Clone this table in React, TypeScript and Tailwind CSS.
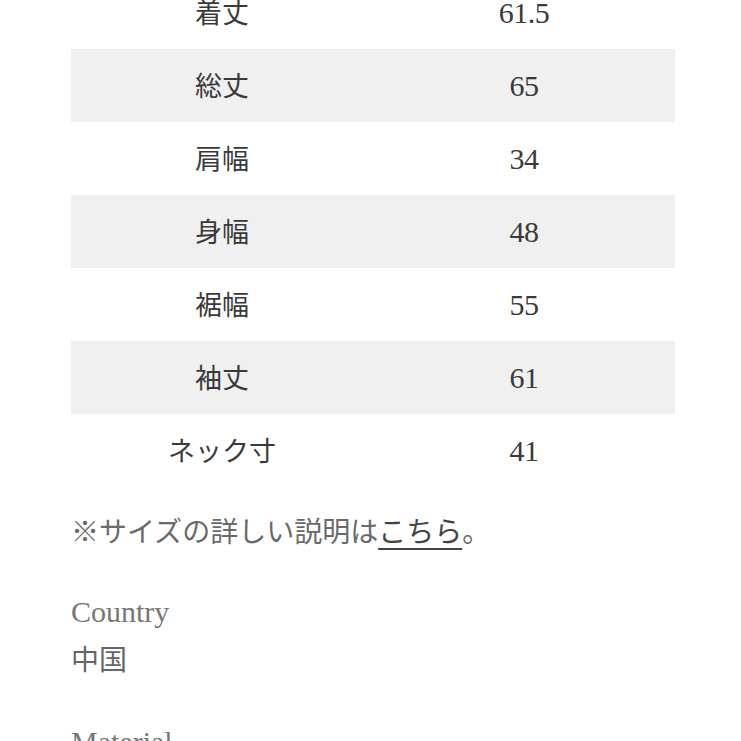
import React from "react";

const rows: [string, string][] = [
  ["着丈", "61.5"],
  ["総丈", "65"],
  ["肩幅", "34"],
  ["身幅", "48"],
  ["裾幅", "55"],
  ["袖丈", "61"],
  ["ネック寸", "41"],
];

const jp = "font-['Noto_Sans_CJK_JP','Noto_Sans',sans-serif]";
const serif = "font-['Liberation_Serif','Noto_Sans_CJK_JP',serif]";

export default function App() {
  return (
    <div className="w-[741px] h-[741px] overflow-hidden bg-white">
      <div className="ml-[71px] w-[604px] mt-[-24px]">
        {/* Size table */}
        <div className="flex flex-col">
          {rows.map(([label, value], i) => (
            <div
              key={label}
              className={`grid grid-cols-2 h-[73px] items-center ${i % 2 === 1 ? "bg-[#f0f0f0]" : "bg-white"}`}
            >
              <div className={`text-center text-[27px] text-[#3a3a3a] ${jp}`}>{label}</div>
              <div className={`text-center text-[30px] tracking-[-0.5px] text-[#3a3a3a] ${serif}`}>{value}</div>
            </div>
          ))}
        </div>

        {/* Note */}
        <p className={`mt-[23px] text-[28px] leading-[40px] text-[#6a6a6a] ${jp}`}>
          ※サイズの詳しい説明は
          <span className="underline underline-offset-[6px] decoration-[2px] text-[#444]">こちら</span>。
        </p>

        {/* Country */}
        <div className="mt-[42px]">
          <div className={`text-[30px] leading-[40px] text-[#777] ${serif}`}>Country</div>
          <div className={`mt-[6px] text-[28px] leading-[40px] text-[#666] ${jp}`}>中国</div>
        </div>

        {/* Material */}
        <div className="mt-[44px]">
          <div className={`text-[30px] leading-[40px] text-[#777] ${serif}`}>Material</div>
        </div>
      </div>
    </div>
  );
}
